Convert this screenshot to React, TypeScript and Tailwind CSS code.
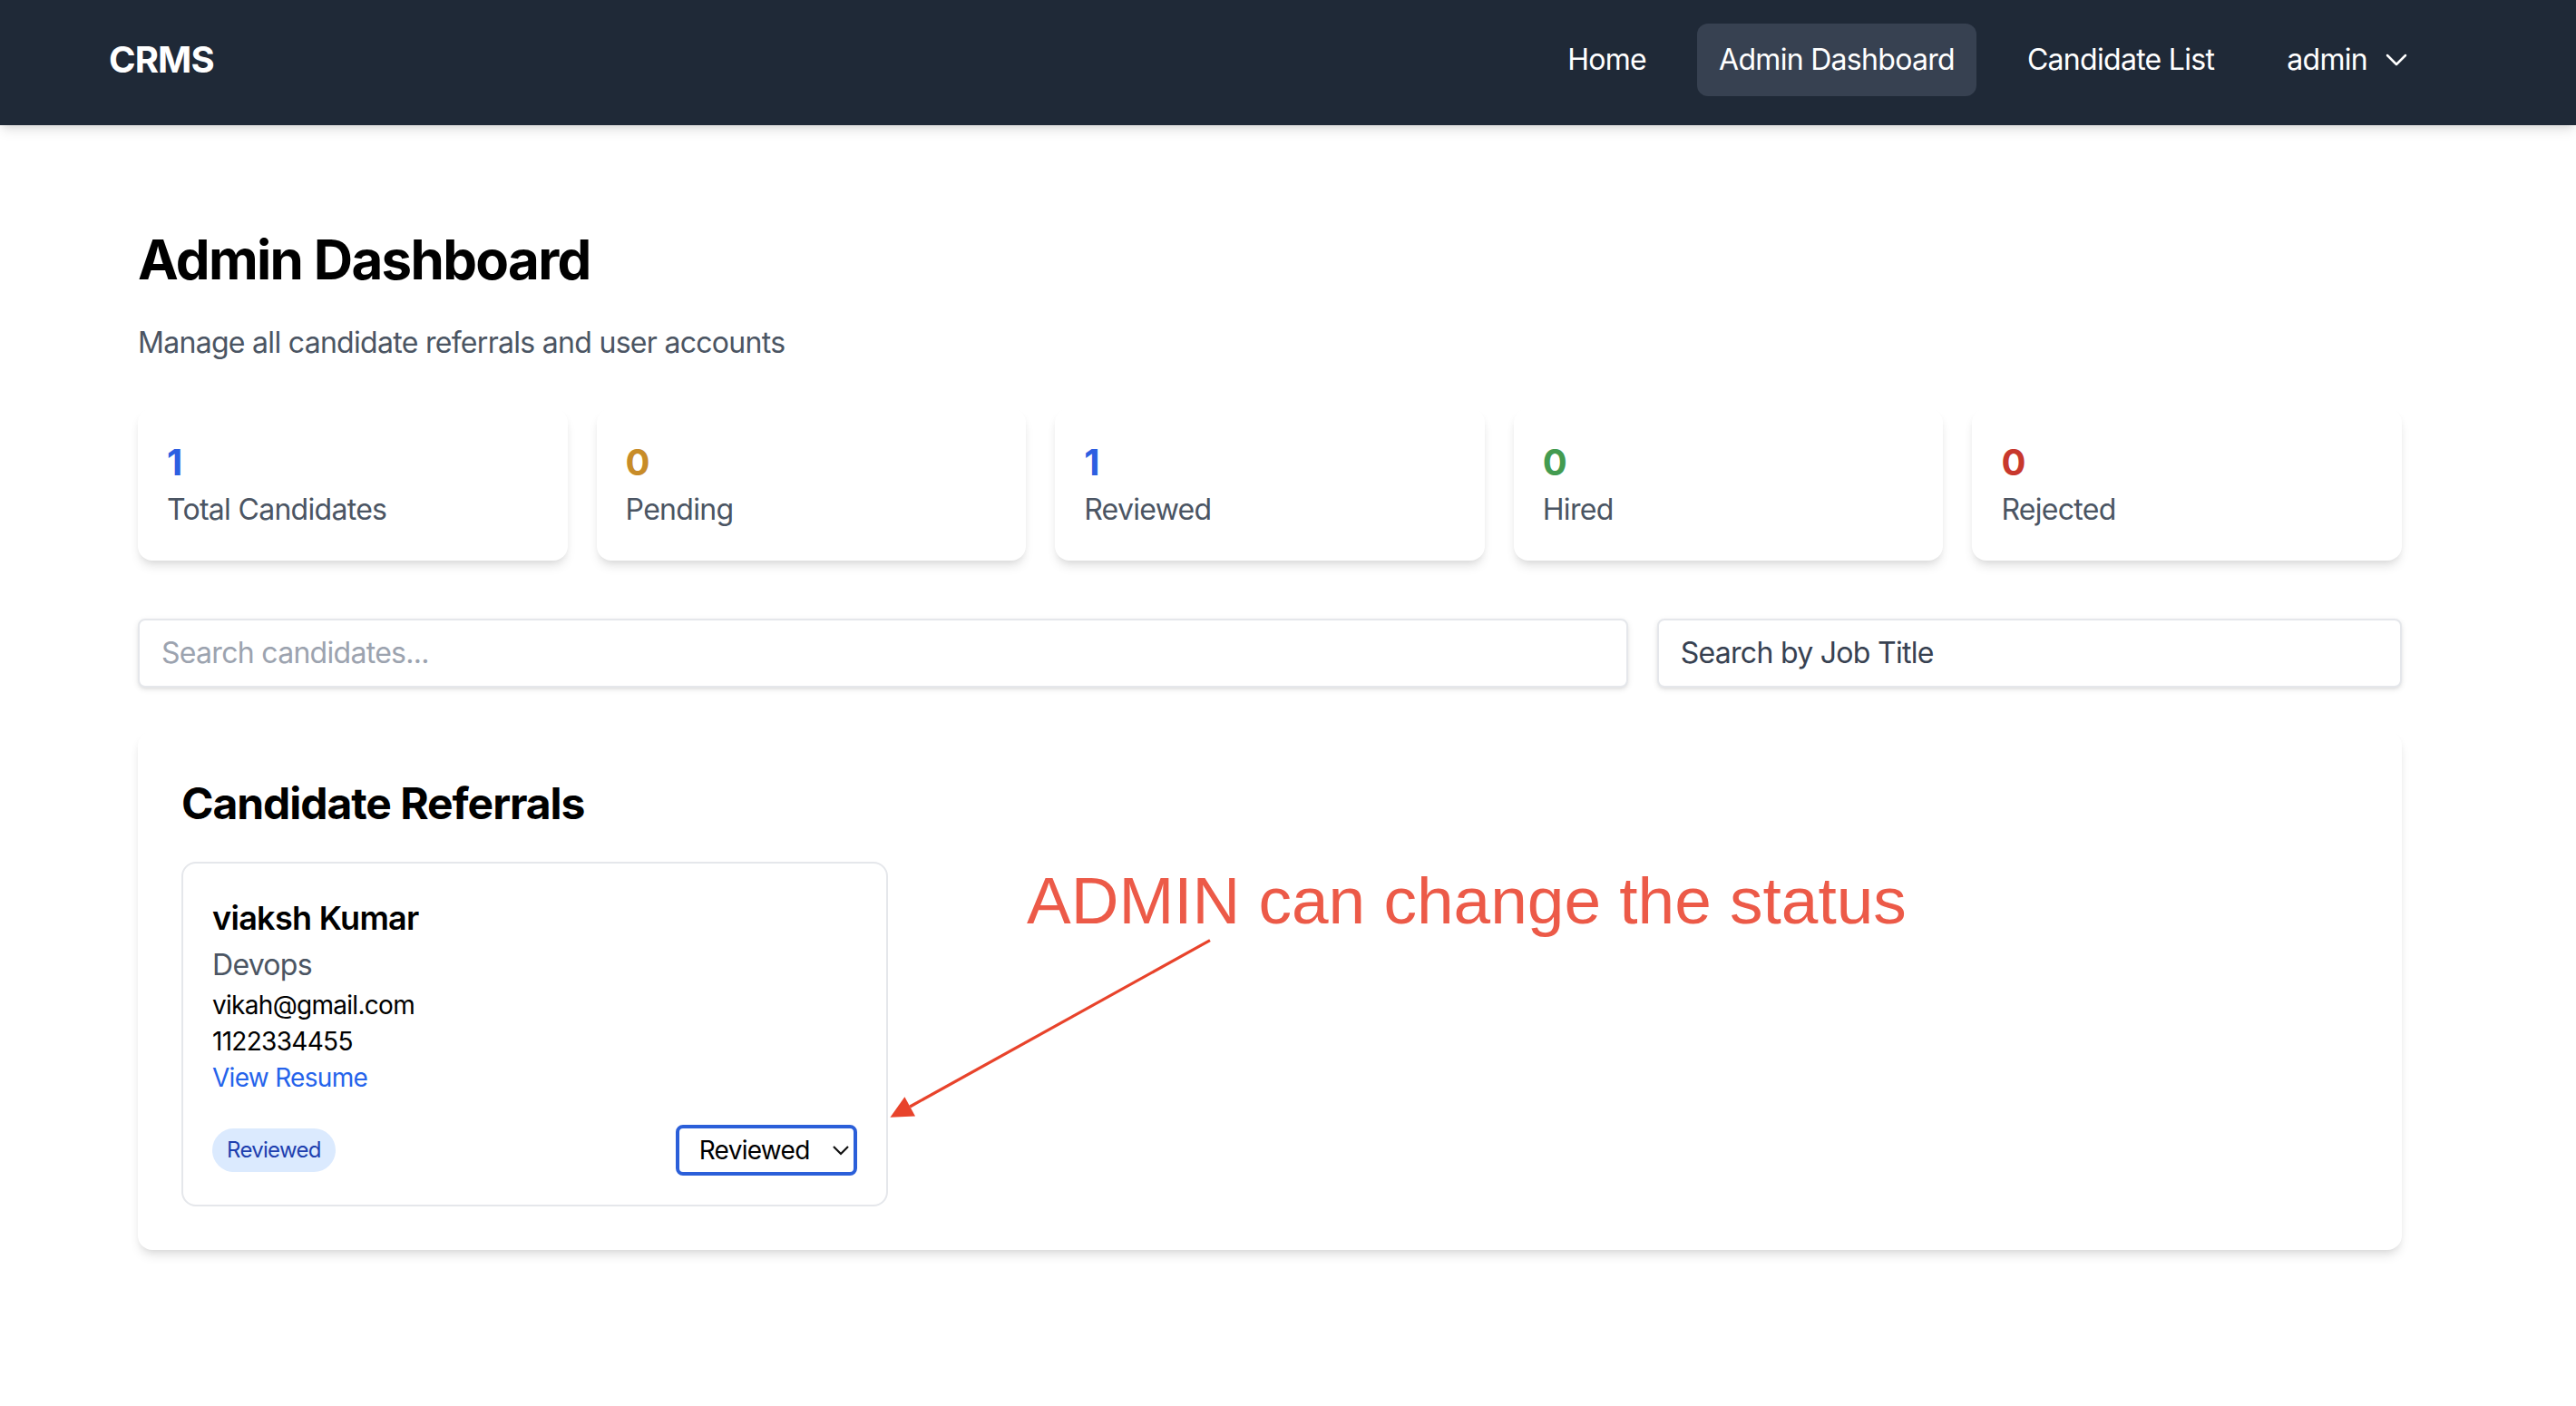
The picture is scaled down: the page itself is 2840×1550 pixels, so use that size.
import { ChevronDown } from "lucide-react";

const stats = [
  { value: 1, label: "Total Candidates", color: "text-[#2d5fe1]" },
  { value: 0, label: "Pending", color: "text-[#c88c28]" },
  { value: 1, label: "Reviewed", color: "text-[#2d5fe1]" },
  { value: 0, label: "Hired", color: "text-[#439b50]" },
  { value: 0, label: "Rejected", color: "text-[#c8382d]" },
];

function Navbar() {
  return (
    <nav className="bg-[#1f2937] text-white shadow-md">
      <div className="w-[1400px]">
        <div className="mx-auto flex max-w-7xl items-center justify-between pt-[13px] pb-4">
          <span className="text-xl font-bold tracking-[-0.022em]">CRMS</span>
          <div className="flex items-center gap-4">
            <a className="rounded-md px-3 py-2">Home</a>
            <a className="rounded-md bg-[#374151] px-3 py-2">Admin Dashboard</a>
            <a className="rounded-md px-3 py-2">Candidate List</a>
            <button className="flex items-center gap-1.5 rounded-md py-2 pr-[9px] pl-3">
              admin
              <ChevronDown className="h-5 w-5" strokeWidth={1.5} />
            </button>
          </div>
        </div>
      </div>
    </nav>
  );
}

function CandidateCard() {
  return (
    <div className="rounded-lg border border-[#e5e7eb] bg-white p-4">
      <h3 className="text-lg font-semibold">viaksh Kumar</h3>
      <p className="text-[#4b5563]">Devops</p>
      <p className="text-sm">vikah@gmail.com</p>
      <p className="text-sm">1122334455</p>
      <a className="block text-sm text-[#2563eb]">View Resume</a>
      <div className="mt-4 flex items-center justify-between">
        <span className="rounded-full bg-[#dbeafe] px-2 py-1 text-xs text-[#1e40af]">
          Reviewed
        </span>
        <div className="relative">
          <select
            defaultValue="Reviewed"
            className="h-7 appearance-none rounded border-2 border-[#2b5fd9] bg-white pr-6 pl-[11px] text-sm text-black outline-none"
          >
            <option>Pending</option>
            <option>Reviewed</option>
            <option>Hired</option>
            <option>Rejected</option>
          </select>
          <svg
            className="pointer-events-none absolute top-1/2 right-[4px] h-[6px] w-[10px] -translate-y-1/2"
            viewBox="0 0 10 6"
            fill="none"
          >
            <path d="M1 1L5 5L9 1" stroke="#111" strokeWidth="1.1" />
          </svg>
        </div>
      </div>
    </div>
  );
}

export default function App() {
  return (
    <div className="relative min-h-[775px] w-[1420px] bg-white font-['Inter',sans-serif] tracking-[-0.022em] text-black [zoom:2]">
      <Navbar />

      <main className="w-[1400px]">
        <div className="mx-auto max-w-7xl px-4 pt-14">
          <h1 className="mb-4 text-3xl font-bold tracking-[-0.028em]">Admin Dashboard</h1>
          <p className="mb-6 text-[#4b5563]">
            Manage all candidate referrals and user accounts
          </p>

          <div className="mb-8 grid grid-cols-5 gap-4">
            {stats.map((s) => (
              <div key={s.label} className="rounded-lg bg-white p-4 shadow-md">
                <p className={`text-xl font-bold ${s.color}`}>{s.value}</p>
                <p className="text-[#4b5563]">{s.label}</p>
              </div>
            ))}
          </div>

          <div className="mb-6 grid grid-cols-[2fr_1fr] gap-4">
            <input
              className="min-w-0 rounded border border-[#e5e7eb] bg-white px-3 py-1.5 shadow-sm outline-none placeholder:text-[#9ca3af]"
              placeholder="Search candidates..."
            />
            <input
              className="min-w-0 rounded border border-[#e5e7eb] bg-white px-3 py-1.5 shadow-sm outline-none placeholder:text-[#374151]"
              placeholder="Search by Job Title"
            />
          </div>

          <section className="rounded-lg bg-white p-6 shadow-md">
            <h2 className="mb-4 text-2xl font-bold tracking-[-0.022em]">Candidate Referrals</h2>
            <div className="grid grid-cols-3 gap-4">
              <CandidateCard />
            </div>
          </section>
        </div>
      </main>

      {/* annotation overlay */}
      <div className="pointer-events-none absolute top-[478px] left-[566px] font-['Liberation_Sans',Arial,sans-serif] text-[36.5px] leading-none tracking-normal whitespace-nowrap text-[#ec5a48]">
        ADMIN can change the status
      </div>
      <svg
        className="pointer-events-none absolute top-[510px] left-[480px] h-[115px] w-[200px]"
        viewBox="0 0 200 115"
      >
        <line x1="187" y1="8.3" x2="21.6" y2="100" stroke="#e8432b" strokeWidth="1.6" />
        <polygon points="10.7,105.9 18.7,94.6 24.5,105.3" fill="#e8432b" />
      </svg>
    </div>
  );
}
